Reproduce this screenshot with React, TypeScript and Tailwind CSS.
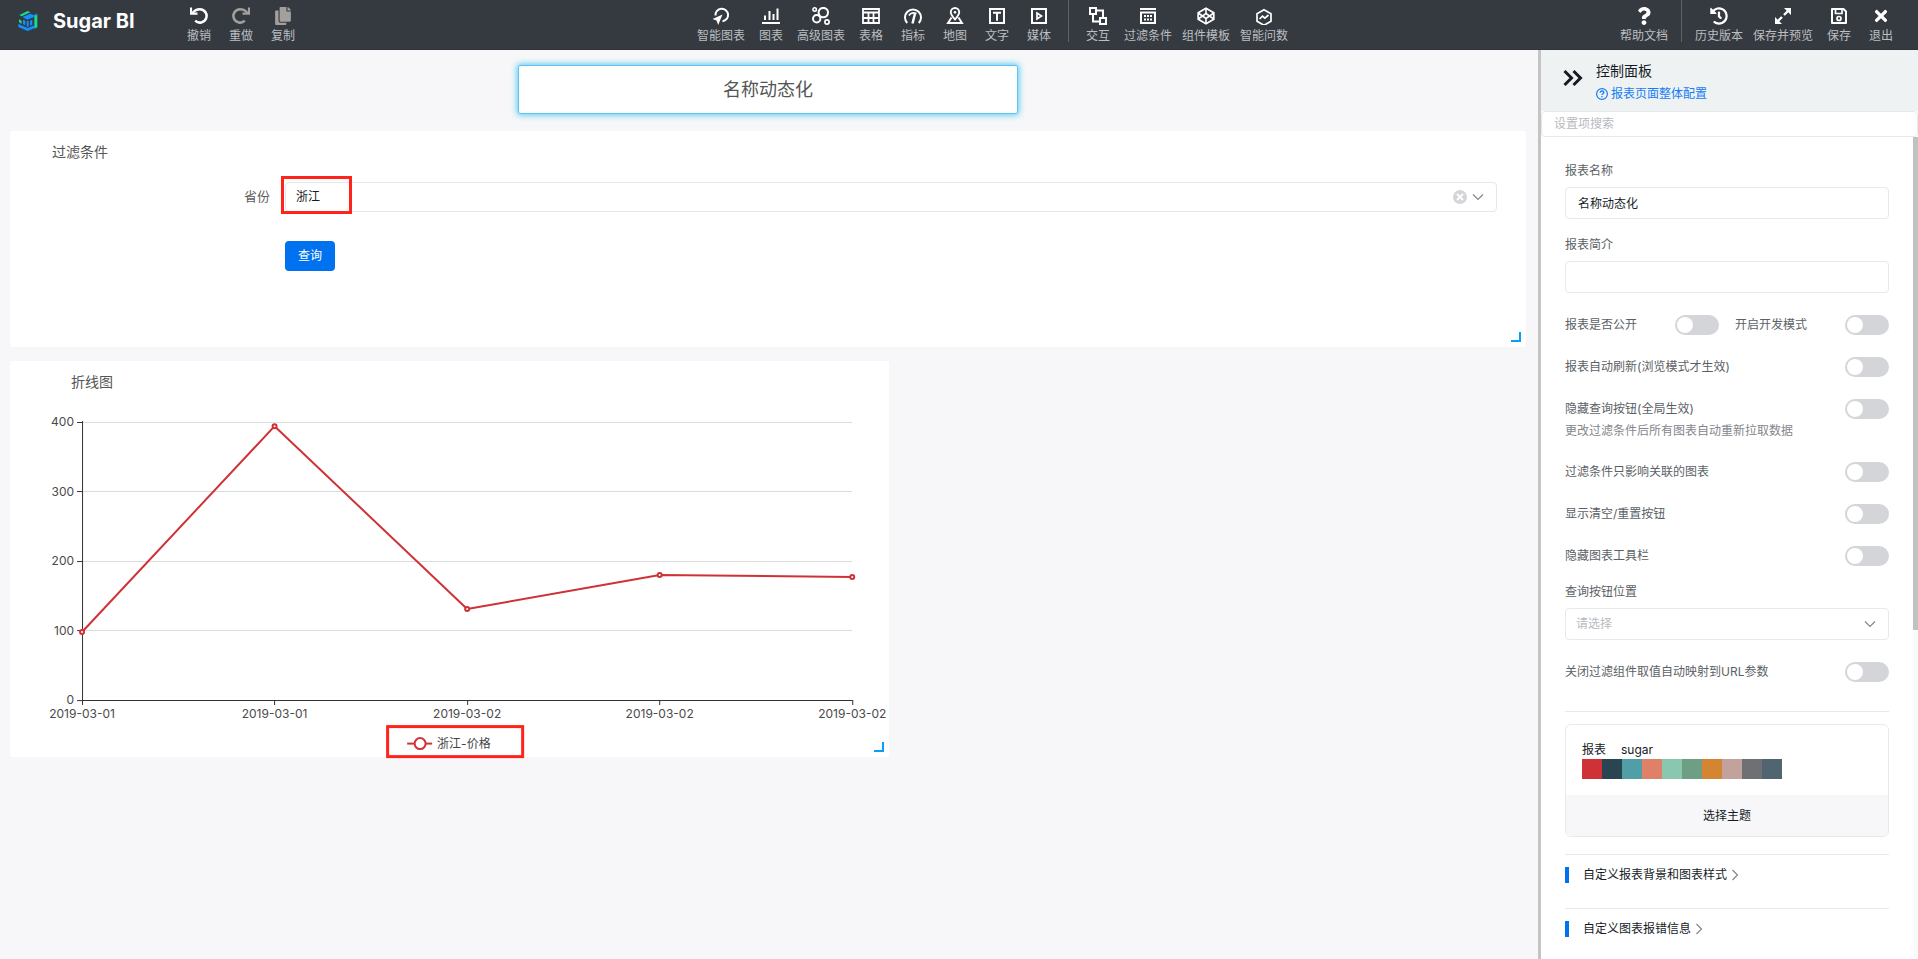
import { useState } from 'react'
import type { ReactNode } from 'react'
import clsx from 'clsx'
import { FaCopy, FaHistory, FaQuestion, FaTimes } from 'react-icons/fa'

// ----------------------------------------------------------------------

type IconProps = { children: ReactNode; className?: string }

function Glyph({ children, className }: IconProps) {
  return (
    <svg
      viewBox="0 0 18 18"
      fill="none"
      stroke="currentColor"
      strokeWidth="2"
      className={clsx('size-[18px]', className)}
      aria-hidden="true"
    >
      {children}
    </svg>
  )
}

function Logo() {
  return (
    <svg viewBox="0 0 58 60" className="size-5 shrink-0" aria-hidden="true">
      <path d="M3 12 28 0l8 4-26 12Z" fill="#11e08a" />
      <path d="m12 18 24-10 9 4 12-5-8 10-22 9Z" fill="#1290ff" />
      <path d="M57 9v40l-9 4V17Z" fill="#11e08a" />
      <path d="m2 25 8 4v9l-8-4Z" fill="#11e08a" />
      <path d="m14 26 7 3v14l-7-3ZM25 30h6v17h-6ZM35 29l7-3v15l-7 3Z" fill="#1290ff" />
      <path d="m0 39 28 12 22-9v9l-22 9L0 48Z" fill="#1290ff" />
    </svg>
  )
}

function ChevronDown({ className }: { className?: string }) {
  return (
    <svg
      viewBox="0 0 12 12"
      fill="none"
      stroke="#84868c"
      className={clsx('pointer-events-none size-3', className)}
      aria-hidden="true"
    >
      <path d="m1 3.5 5 5 5-5" strokeWidth="1.2" />
    </svg>
  )
}

// ----------------------------------------------------------------------

type Tool = { label: string; icon: ReactNode; disabled?: boolean }

const HISTORY_TOOLS: Tool[] = [
  {
    label: '撤销',
    icon: (
      <Glyph>
        <path d="M1 .5v6.2h6.5" strokeWidth="2.2" />
        <path d="M2.5 6C4.500 3.400 7 2.200 10 2.200a6.700 6.700 0 1 1-4.800 11.500" strokeWidth="2.500" />
      </Glyph>
    ),
  },
  {
    label: '重做',
    disabled: true,
    icon: (
      <Glyph className="text-[#a29f9d]">
        <path d="M17 .5v6.2h-6.500" strokeWidth="2.2" />
        <path d="M15.500 6C13.500 3.400 11 2.200 8 2.200a6.700 6.700 0 1 0 4.800 11.500" strokeWidth="2.500" />
      </Glyph>
    ),
  },
  { label: '复制', disabled: true, icon: <FaCopy className="size-[18px] text-[#a29f9d]" /> },
]

const CHART_TOOLS: Tool[] = [
  {
    label: '智能图表',
    icon: (
      <Glyph>
        <path d="M3.5 8.5a6.300 6.300 0 1 1 7 5.800" />
        <path d="M10.500 7.500.5 12l4 1.500 1.700 4.500Z" fill="currentColor" stroke="none" />
      </Glyph>
    ),
  },
  {
    label: '图表',
    icon: (
      <Glyph>
        <path d="M0 16h18M3 13V8.500M7.500 13V4M11.500 13V7M15.500 13V1.500" />
      </Glyph>
    ),
  },
  {
    label: '高级图表',
    icon: (
      <Glyph>
        <circle cx="2.7" cy="2.5" r="1.7" strokeWidth="1.6" />
        <circle cx="11.3" cy="5.6" r="4.7" />
        <circle cx="4.7" cy="11.7" r="3.7" />
        <circle cx="15" cy="15" r="2.1" strokeWidth="1.7" />
      </Glyph>
    ),
  },
  {
    label: '表格',
    icon: (
      <Glyph>
        <path d="M1 2h16v14H1ZM1 5.500h16M1 11h16M6.500 6v10M11.500 6v10" strokeWidth="1.8" />
      </Glyph>
    ),
  },
  {
    label: '指标',
    icon: (
      <Glyph>
        <path d="M3.200 16A8 8 0 1 1 14.800 16" strokeWidth="2" />
        <path d="M8.500 16.500 11 6.500" strokeWidth="2.400" />
        <path d="M4.800 8.500C6.500 6 9 5.200 12.500 6.500" strokeWidth="1.600" />
      </Glyph>
    ),
  },
  {
    label: '地图',
    icon: (
      <Glyph>
        <path d="M9 12.500c-3-3.500-4.200-5-4.200-7.300a4.200 4.200 0 0 1 8.400 0c0 2.300-1.200 3.800-4.200 7.300Z" strokeWidth="1.9" />
        <circle cx="9" cy="5.3" r="1" fill="currentColor" strokeWidth="1" />
        <path d="M5.500 10.500 2 16h14l-3.500-5.500" strokeWidth="1.9" />
      </Glyph>
    ),
  },
  {
    label: '文字',
    icon: (
      <Glyph>
        <path d="M2 2h14v14H2ZM5 5.800h8M9 5.800v8" />
      </Glyph>
    ),
  },
  {
    label: '媒体',
    icon: (
      <Glyph>
        <path d="M2 2h14v14H2Z" />
        <path d="M7 6v6l4.500-3Z" strokeWidth="1.7" />
      </Glyph>
    ),
  },
]

const EXTRA_TOOLS: Tool[] = [
  {
    label: '交互',
    icon: (
      <Glyph>
        <path d="M1 1h6v6H1ZM11 11h6v6h-6ZM7 3.500h7V11M4 7v7.500h7" />
      </Glyph>
    ),
  },
  {
    label: '过滤条件',
    icon: (
      <Glyph>
        <path d="M1 2h16M2 5.500h14V16H2Z" />
        <path d="M5 9h2M8 9h2M11 9h2M5 12.500h2M8 12.500h2M11 12.500h2" />
      </Glyph>
    ),
  },
  {
    label: '组件模板',
    icon: (
      <Glyph>
        <path d="m9 1.200 7.800 4.500v6.600L9 16.800l-7.800-4.500V5.700Z" strokeWidth="1.7" />
        <path d="M9 1v5M9 12v5M1.200 6 9 11.500 16.800 6M1.200 12 9 6.500l7.800 5.500" strokeWidth="1.6" />
      </Glyph>
    ),
  },
  {
    label: '智能问数',
    icon: (
      <Glyph>
        <path d="m9 2.700 7 4v7.600l-7 4-7-4V6.700Z" strokeWidth="1.7" />
        <path d="m4.500 12 3-2.800 2.300 2L13.500 8" strokeWidth="1.7" />
      </Glyph>
    ),
  },
]

const PAGE_TOOLS: Tool[] = [
  { label: '历史版本', icon: <FaHistory className="size-[18px]" /> },
  {
    label: '保存并预览',
    icon: (
      <Glyph>
        <path d="M10 1h7v7ZM1 10v7h7Z" fill="currentColor" stroke="none" />
        <path d="m10 8 4-4M4 14l4-4" strokeWidth="2.4" />
      </Glyph>
    ),
  },
  {
    label: '保存',
    icon: (
      <Glyph>
        <path d="M2 2h11.500L16 4.500V16H2Z" strokeLinejoin="round" />
        <path d="M5.500 2v4.500H12V2" strokeWidth="1.7" />
        <circle cx="9" cy="11.5" r="2" strokeWidth="1.7" />
      </Glyph>
    ),
  },
  { label: '退出', icon: <FaTimes className="size-[18px]" /> },
]

function ToolButton({ label, icon, disabled }: Tool) {
  return (
    <button
      type="button"
      disabled={disabled}
      className="flex min-w-[42px] flex-col items-center gap-[2px] px-[5px] pt-[7px] text-white"
    >
      {icon}
      <span className="text-xs leading-[18px] whitespace-nowrap text-[#bcbec1]">{label}</span>
    </button>
  )
}

function ToolGroup({ tools }: { tools: Tool[] }) {
  return (
    <div className="flex items-start">
      {tools.map((tool) => (
        <ToolButton key={tool.label} {...tool} />
      ))}
    </div>
  )
}

function Separator() {
  return <div className="mx-2 h-[42px] w-px bg-[#5d6268]" />
}

function Header() {
  return (
    <header className="flex h-[50px] shrink-0 items-start border-b border-[#30343a] bg-[#343a40] pr-4">
      <div className="flex w-[370px] shrink-0 items-start pl-[18px]">
        <div className="flex h-[42px] w-40 items-center gap-[15px]">
          <Logo />
          <span className="text-xl font-bold whitespace-nowrap text-white">Sugar BI</span>
        </div>
        <ToolGroup tools={HISTORY_TOOLS} />
      </div>
      <nav className="flex min-w-0 flex-1 items-start justify-center">
        <ToolGroup tools={CHART_TOOLS} />
        <Separator />
        <ToolGroup tools={EXTRA_TOOLS} />
      </nav>
      <ToolButton label="帮助文档" icon={<FaQuestion className="size-[18px]" />} />
      <Separator />
      <ToolGroup tools={PAGE_TOOLS} />
    </header>
  )
}

// ----------------------------------------------------------------------

function ResizeCorner() {
  return (
    <span className="absolute right-[5px] bottom-[5px] size-[10px] cursor-se-resize border-r-2 border-b-2 border-[#0a9dfa]" />
  )
}

function FilterCard() {
  const [province, setProvince] = useState('浙江')

  return (
    <section className="relative h-[216px] rounded-xs bg-white pt-[11px] pr-[29px]">
      <h2 className="pl-[42px] text-sm leading-5 text-[#555]">过滤条件</h2>
      <div className="mt-5 flex items-center">
        <label htmlFor="province" className="w-[275px] shrink-0 pr-[15px] text-right text-[13px] text-[#5e5e5e]">
          省份
        </label>
        <div className="relative flex-1">
          <select
            id="province"
            value={province}
            onChange={(e) => setProvince(e.target.value)}
            className="block h-[30px] w-full appearance-none rounded border border-[#e6e7ea] bg-white px-[10px] text-xs text-[#151b26]"
          >
            <option>浙江</option>
          </select>
          <button
            type="button"
            aria-label="清除"
            className="absolute top-2 right-[30px] size-[14px] rounded-full bg-[#d4d5d9]"
          >
            <svg viewBox="0 0 14 14" stroke="#fff" strokeWidth="1.8" aria-hidden="true">
              <path d="m4 4 6 6M10 4l-6 6" />
            </svg>
          </button>
          <ChevronDown className="absolute top-[9px] right-[13px]" />
          <span className="pointer-events-none absolute -top-[6px] -left-1 h-[38px] w-[71px] border-3 border-[#ff231c]" />
        </div>
      </div>
      <div className="mt-[29px] pl-[275px]">
        <button type="button" className="h-[30px] w-[50px] rounded bg-[#0072f0] text-xs text-white">
          查询
        </button>
      </div>
      <ResizeCorner />
    </section>
  )
}

// ----------------------------------------------------------------------

const POINTS = [
  { date: '2019-03-01', value: 98 },
  { date: '2019-03-01', value: 394 },
  { date: '2019-03-02', value: 131 },
  { date: '2019-03-02', value: 180 },
  { date: '2019-03-02', value: 177 },
]
const TICKS = [0, 100, 200, 300, 400]

const LEFT = 72
const BOTTOM = 339
const STEP = 192.5

const xOf = (i: number) => LEFT + i * STEP
const yOf = (value: number) => BOTTOM - value * 0.695
// keeps one-pixel lines crisp
const snap = (n: number) => Math.floor(n) + 0.5

function LineChart() {
  return (
    <svg viewBox="0 0 879 396" className="block w-full overflow-visible" role="img" aria-label="折线图">
      <text x="61" y="26" fontSize="14" fill="#555">
        折线图
      </text>
      {TICKS.map((tick) => (
        <g key={tick}>
          {tick > 0 && <path d={`M${LEFT} ${snap(yOf(tick))}H842`} stroke="#dcdcdc" />}
          <path d={`M67 ${snap(yOf(tick))}h5`} stroke="#333" />
          <text x="64" y={yOf(tick) + 4} fontSize="12" textAnchor="end" fill="#4a4a4a">
            {tick}
          </text>
        </g>
      ))}
      <path d={`M${snap(LEFT)} 60V${snap(BOTTOM)}H842.5`} stroke="#333" fill="none" />
      {POINTS.map((point, i) => (
        <g key={i}>
          <path d={`M${snap(xOf(i))} ${BOTTOM}v5`} stroke="#333" />
          <text x={xOf(i)} y="357" fontSize="12" textAnchor="middle" fill="#4a4a4a">
            {point.date}
          </text>
        </g>
      ))}
      <polyline
        points={POINTS.map((point, i) => `${xOf(i)},${yOf(point.value)}`).join(' ')}
        fill="none"
        stroke="#cf3236"
        strokeWidth="2"
        strokeLinejoin="bevel"
      />
      {POINTS.map((point, i) => (
        <circle key={i} cx={xOf(i)} cy={yOf(point.value)} r="2" fill="#fff" stroke="#cf3236" strokeWidth="2" />
      ))}

      {/* legend */}
      <path d="M397 382.5h25" stroke="#cf3236" strokeWidth="2" />
      <circle cx="410" cy="382.5" r="5.5" fill="#fff" stroke="#cf3236" strokeWidth="2" />
      <text x="427" y="387" fontSize="12" fill="#444">
        浙江-价格
      </text>
      <rect x="377.5" y="365.5" width="135" height="30" fill="none" stroke="#ff231c" strokeWidth="3" />
    </svg>
  )
}

// ----------------------------------------------------------------------

function Switch({ label, hint }: { label: string; hint?: string }) {
  return (
    <div className="flex-1">
      <label className="flex h-5 items-center justify-between text-xs text-[#5c5f66]">
        {label}
        <input
          type="checkbox"
          role="switch"
          className="h-5 w-11 shrink-0 appearance-none rounded-full bg-[#d4d5d9] p-[2px] before:block before:size-4 before:rounded-full before:bg-white checked:bg-[#0072f0] checked:before:ml-6"
        />
      </label>
      {hint && <p className="mt-1 mb-px text-xs leading-4 text-[#84868c]">{hint}</p>}
    </div>
  )
}

function TextField({ id, label, value }: { id: string; label: string; value: string }) {
  return (
    <div className="flex flex-col gap-2">
      <label htmlFor={id} className="text-xs leading-4 text-[#5c5f66]">
        {label}
      </label>
      <input
        id={id}
        defaultValue={value}
        className="h-8 w-full rounded border border-[#e8e9eb] px-3 pb-[2px] text-xs text-[#151b26]"
      />
    </div>
  )
}

const THEME_COLORS = [
  'bg-[#cf3236]',
  'bg-[#294552]',
  'bg-[#519fa6]',
  'bg-[#df8169]',
  'bg-[#89c7b0]',
  'bg-[#6e9f84]',
  'bg-[#d38532]',
  'bg-[#c3a29b]',
  'bg-[#6f7074]',
  'bg-[#50656f]',
]

function ThemeCard() {
  return (
    <div className="mt-3 overflow-hidden rounded-md border border-[#e8e9eb]">
      <div className="px-4 pt-[17px] pb-4">
        <div className="flex gap-[15px] text-xs leading-4 text-[#151b26]">
          <span>报表</span>
          <span>sugar</span>
        </div>
        <div className="mt-px flex">
          {THEME_COLORS.map((color) => (
            <span key={color} className={clsx('size-5', color)} />
          ))}
        </div>
      </div>
      <button type="button" className="block h-[41px] w-full bg-[#f7f7f9] pt-px text-xs text-[#151b26]">
        选择主题
      </button>
    </div>
  )
}

function Section({ title }: { title: string }) {
  return (
    <div className="border-t border-[#e8e9eb] pt-3 pb-[25px]">
      <button
        type="button"
        className="flex h-4 items-center gap-1 border-l-4 border-[#0072f0] pl-[14px] text-xs leading-4 text-[#151b26]"
      >
        {title}
        <svg viewBox="0 0 8 12" fill="none" stroke="#84868c" className="h-3 w-2" aria-hidden="true">
          <path d="m1.500 1 5 5-5 5" strokeWidth="1.2" />
        </svg>
      </button>
    </div>
  )
}

function ControlPanel() {
  return (
    <aside className="flex w-[380px] shrink-0 flex-col border-l-3 border-[#c4c4c4] bg-white">
      <div className="flex h-[61px] shrink-0 items-start bg-[#eef2f3] pt-3 pl-[22px]">
        <button type="button" aria-label="收起" className="mt-[7px] mr-[13px]">
          <svg viewBox="0 0 20 18" fill="none" stroke="#151b26" strokeWidth="3" className="h-[18px] w-5">
            <path d="m1.500 2 7 7-7 7M10.500 2l7 7-7 7" />
          </svg>
        </button>
        <div>
          <h2 className="text-sm leading-[18px] text-[#151b26]">控制面板</h2>
          <a href="#help" className="mt-[6px] flex items-center gap-[3px] text-xs leading-4 text-[#167cf3]">
            <svg viewBox="0 0 12 12" fill="none" stroke="currentColor" className="size-3" aria-hidden="true">
              <circle cx="6" cy="6" r="5.4" strokeWidth="1.2" />
              <path d="M4.200 4.700c0-2.300 3.600-2.200 3.600-.1C7.800 5.800 6 5.800 6 7.100M6 8v1.300" strokeWidth="1.3" />
            </svg>
            报表页面整体配置
          </a>
        </div>
      </div>
      <input
        type="search"
        aria-label="设置项搜索"
        placeholder="设置项搜索"
        className="h-[26px] w-full shrink-0 rounded border border-[#e8e9eb] px-3 pb-[2px] text-xs placeholder:text-[#b8babf]"
      />
      <div className="flex min-h-0 flex-1">
        <div className="flex-1 overflow-hidden px-6 pt-[26px]">
          <div className="flex flex-col gap-[18px]">
            <TextField id="report-name" label="报表名称" value="名称动态化" />
            <TextField id="report-intro" label="报表简介" value="" />
          </div>
          <div className="mt-[22px] flex flex-col gap-[22px]">
            <div className="flex gap-4">
              <Switch label="报表是否公开" />
              <Switch label="开启开发模式" />
            </div>
            <Switch label="报表自动刷新(浏览模式才生效)" />
            <Switch label="隐藏查询按钮(全局生效)" hint="更改过滤条件后所有图表自动重新拉取数据" />
            <Switch label="过滤条件只影响关联的图表" />
            <Switch label="显示清空/重置按钮" />
            <Switch label="隐藏图表工具栏" />
          </div>
          <div className="mt-[18px] flex flex-col gap-2">
            <label htmlFor="button-position" className="text-xs leading-4 text-[#5c5f66]">
              查询按钮位置
            </label>
            <div className="relative">
              <select
                id="button-position"
                className="block h-8 w-full appearance-none rounded border border-[#e8e9eb] bg-white px-[10px] text-xs text-[#b8babf]"
              >
                <option>请选择</option>
              </select>
              <ChevronDown className="absolute top-[10px] right-[13px]" />
            </div>
          </div>
          <div className="mt-[22px] mb-[29px] flex">
            <Switch label="关闭过滤组件取值自动映射到URL参数" />
          </div>
          <div className="mb-[17px] border-t border-[#e8e9eb]">
            <ThemeCard />
          </div>
          <Section title="自定义报表背景和图表样式" />
          <Section title="自定义图表报错信息" />
        </div>
        <div className="w-[5px] shrink-0 bg-[#fafafa]">
          <div className="h-[60%] bg-[#c1c1c1]" />
        </div>
      </div>
    </aside>
  )
}

// ----------------------------------------------------------------------

export default function App() {
  return (
    <div className="flex h-screen flex-col overflow-hidden bg-[#f7f7f9] font-['Inter','Noto_Sans_CJK_SC',sans-serif]">
      <Header />
      <div className="flex min-h-0 flex-1">
        <main className="min-w-0 flex-1 pt-[15px] pr-3 pl-[10px]">
          <h1 className="mx-auto flex h-[49px] w-[500px] items-center justify-center rounded-xs border border-[#5fc4f8] bg-white text-lg text-[#555] shadow-[0_0_6px_1px_#51cbee]">
            名称动态化
          </h1>
          <div className="mt-[17px] flex flex-col gap-[14px]">
            <FilterCard />
            <section className="relative w-[58%] rounded-xs bg-white">
              <LineChart />
              <ResizeCorner />
            </section>
          </div>
        </main>
        <ControlPanel />
      </div>
    </div>
  )
}
